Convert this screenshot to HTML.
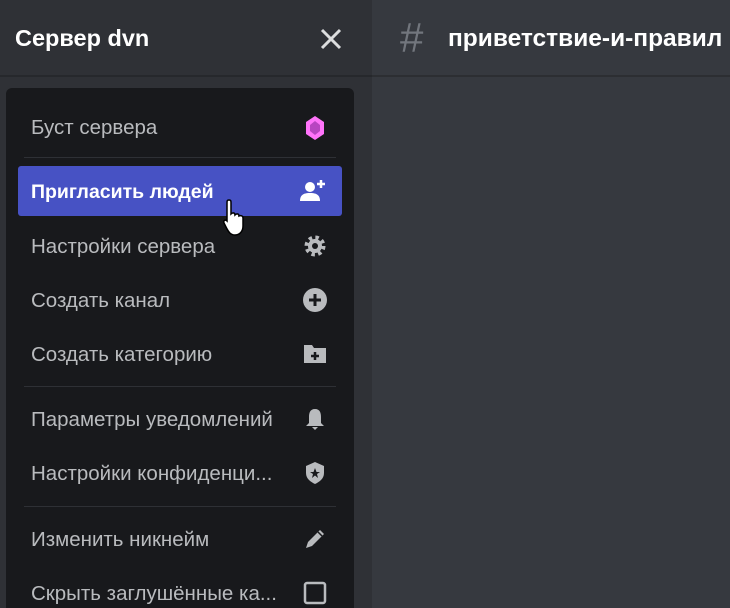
<!DOCTYPE html>
<html style="overflow:hidden;height:608px"><head><meta charset="utf-8"><style>
body{margin:0;width:730px;height:608px;overflow:hidden;background:#36393f;font-family:"Liberation Sans",sans-serif;position:relative}
.side{position:absolute;left:0;top:0;width:372px;height:608px;background:#2f3136}
.hdr{position:absolute;left:0;top:0;width:372px;height:75px;border-bottom:2px solid #26282c}
.title{position:absolute;left:15px;top:25px;color:#fff;font-weight:bold;font-size:23.5px}
.x{position:absolute;left:318px;top:26px}
.rh{position:absolute;left:372px;top:0;width:358px;height:75px;border-bottom:2px solid #2c2e32}
.hash{position:absolute;left:400px;top:14px;color:#72767d;font-size:42px}
.ch{position:absolute;left:448px;top:25px;color:#fff;font-weight:bold;font-size:24.5px;white-space:nowrap}
.menu{position:absolute;left:6px;top:88px;width:348px;height:540px;background:#18191c;border-radius:6px;overflow:hidden}
.it{position:absolute;left:12px;width:324px;height:50px;color:#b9bbbe;font-size:20.5px;line-height:52px;border-radius:3px;white-space:nowrap}
.it span{position:absolute;left:13px}
.it svg{position:absolute;right:15px;top:13px}
.sel{background:#4752c4;color:#fff;font-weight:bold;font-size:19.5px}
.sep{position:absolute;left:18px;width:312px;height:1px;background:#2e3035}
</style></head><body>
<div class="side"></div>
<div class="hdr"></div>
<div class="title">Сервер dvn</div>
<svg class="x" width="26" height="26" viewBox="0 0 26 26"><path d="M4 4L22 22M22 4L4 22" stroke="#dcddde" stroke-width="3"/></svg>
<div class="rh"></div>
<div class="hash">#</div>
<div class="ch">приветствие-и-правил</div>
<div class="menu">
<div class="it" style="top:14px"><span>Буст сервера</span><svg width="24" height="26" viewBox="0 0 24 26"><path d="M12 1L21 7V19L12 25L3 19V7Z" fill="#ff73fa"/><path d="M12 6L17 10V16L12 20L7 16V10Z" fill="#b845c1"/></svg></div>
<div class="sep" style="top:69px"></div>
<div class="it sel" style="top:78px"><span>Пригласить людей</span><svg width="28" height="24" viewBox="0 0 28 24"><circle cx="11" cy="8" r="5" fill="#fff"/><path d="M1 22C1 15 6 14 11 14S21 15 21 22Z" fill="#fff"/><path d="M22 1V9M18 5H26" stroke="#fff" stroke-width="2.5"/></svg></div>
<div class="it" style="top:133px"><span>Настройки сервера</span><svg width="24" height="24" viewBox="0 0 24 24"><circle cx="12" cy="12" r="8" fill="none" stroke="#b9bbbe" stroke-width="5" stroke-dasharray="3.2 3.1"/><circle cx="12" cy="12" r="7" fill="#b9bbbe"/><circle cx="12" cy="12" r="3" fill="#18191c"/></svg></div>
<div class="it" style="top:187px"><span>Создать канал</span><svg width="24" height="24" viewBox="0 0 24 24"><circle cx="12" cy="12" r="12" fill="#b9bbbe"/><path d="M12 6V18M6 12H18" stroke="#18191c" stroke-width="3"/></svg></div>
<div class="it" style="top:241px"><span>Создать категорию</span><svg width="24" height="24" viewBox="0 0 24 24"><path d="M1 3H9L11 6H23V21H1Z" fill="#b9bbbe"/><path d="M12 10V18M8 14H16" stroke="#18191c" stroke-width="2.5"/></svg></div>
<div class="sep" style="top:298px"></div>
<div class="it" style="top:306px"><span>Параметры уведомлений</span><svg width="24" height="24" viewBox="0 0 24 24"><path d="M12 2C7 2 6 6 6 10V16L3 19H21L18 16V10C18 6 17 2 12 2Z" fill="#b9bbbe"/><path d="M9 20H15L12 23Z" fill="#b9bbbe"/></svg></div>
<div class="it" style="top:360px"><span>Настройки конфиденци...</span><svg width="24" height="24" viewBox="0 0 24 24"><path d="M12 1L21 5V12C21 18 16 21 12 23C8 21 3 18 3 12V5Z" fill="#b9bbbe"/><path d="M12 7L13.5 11H17L14 13L15 17L12 14.5L9 17L10 13L7 11H10.5Z" fill="#18191c"/></svg></div>
<div class="sep" style="top:418px"></div>
<div class="it" style="top:426px"><span>Изменить никнейм</span><svg width="24" height="24" viewBox="0 0 24 24"><path d="M3 21L5 15L17 3L21 7L9 19Z" fill="#b9bbbe"/><path d="M15 5L19 9" stroke="#18191c" stroke-width="1.5"/></svg></div>
<div class="it" style="top:480px"><span>Скрыть заглушённые ка...</span><svg width="24" height="24" viewBox="0 0 24 24"><rect x="2" y="2" width="20" height="20" rx="2" fill="none" stroke="#b9bbbe" stroke-width="2.5"/></svg></div>
</div>
<svg style="position:absolute;left:222px;top:198px" width="26" height="40" viewBox="0 0 26 40"><path d="M7 2C9 2 9 3 9 5V16C11 14 13 15 13 17C15 15 17 16 17 18C19 17 21 18 21 20V28C21 34 17 37 13 37C9 37 7 35 4 29L2 25C1 23 3 21 5 23L5 5C5 3 5 2 7 2Z" fill="#fff" stroke="#000" stroke-width="1.5"/></svg>
</body></html>
